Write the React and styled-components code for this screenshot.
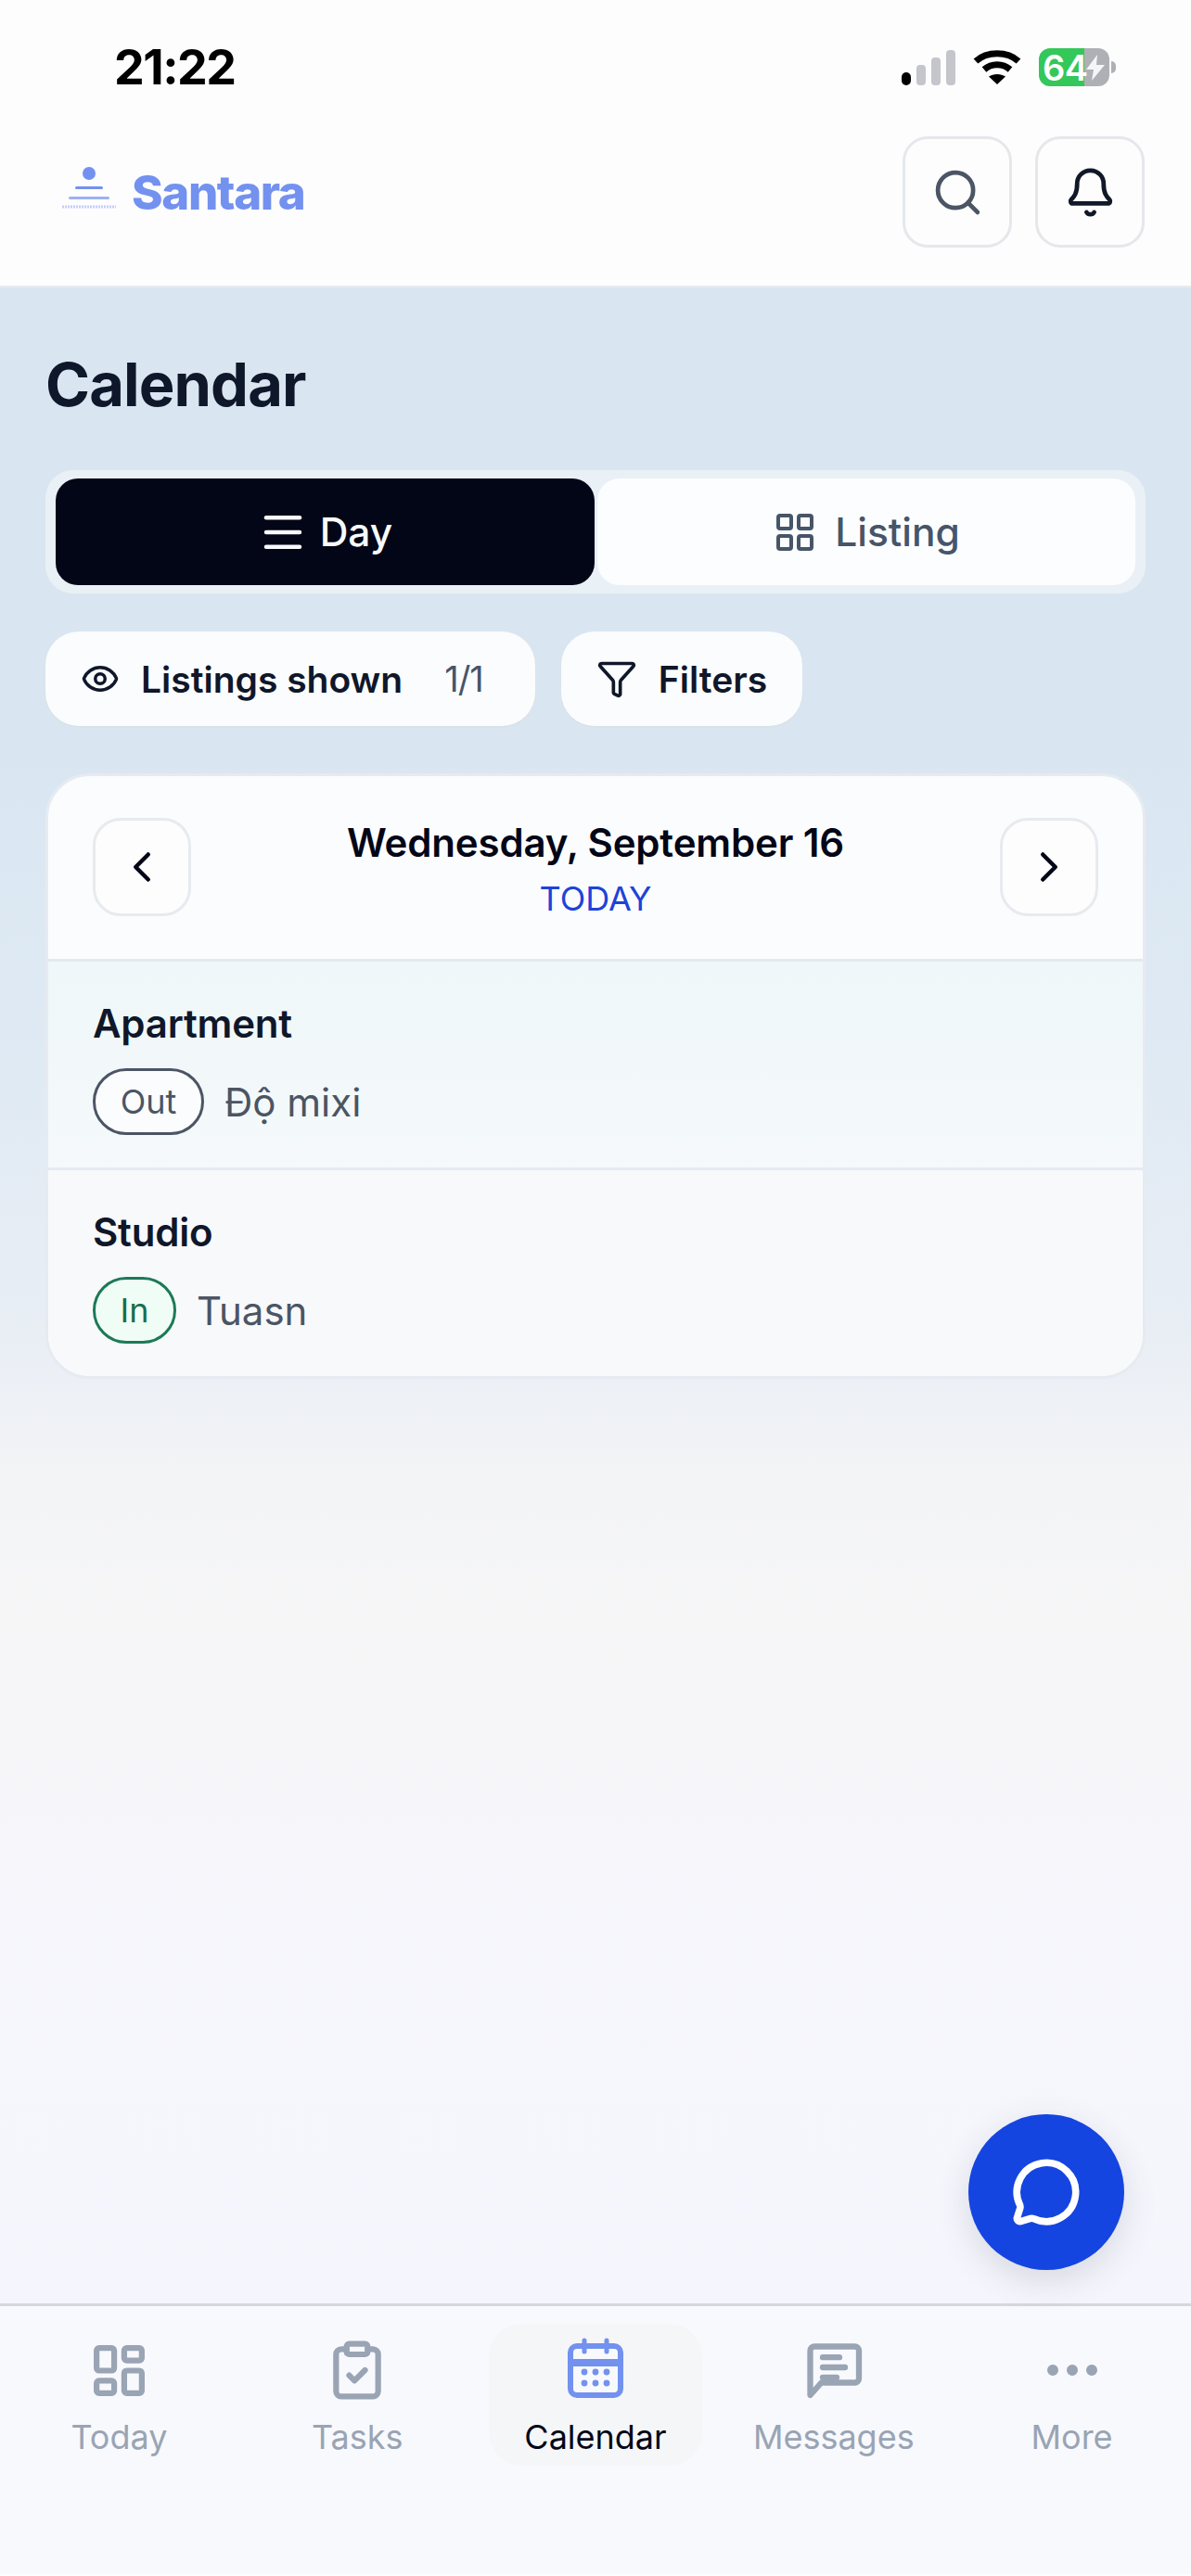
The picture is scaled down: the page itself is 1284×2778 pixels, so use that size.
import styled, { createGlobalStyle } from "styled-components"
import {
    Bell,
    ChevronLeft,
    ChevronRight,
    ClipboardCheck,
    Ellipsis,
    Eye,
    Funnel,
    LayoutDashboard,
    LayoutGrid,
    Menu,
    MessageCircle,
    Search,
} from "lucide-react"

const GlobalStyle = createGlobalStyle`
    html, body {
        margin: 0;
        padding: 0;
    }
    body {
        font-family: "Inter", "Liberation Sans", sans-serif;
        background: #f5f6fd;
    }
    * {
        box-sizing: border-box;
    }
`

const Page = styled.div`
    position: relative;
    display: flex;
    flex-direction: column;
    width: 1284px;
    height: 2778px;
    overflow: hidden;
`

const TopArea = styled.header`
    height: 310px;
    background: #fdfdfe;
    border-bottom: 2px solid #e6ecf2;
`

const StatusBar = styled.div`
    display: flex;
    align-items: center;
    justify-content: space-between;
    height: 147px;
    padding: 0 88px 2px 123px;
`

const Clock = styled.span`
    font-size: 52px;
    font-weight: 700;
    letter-spacing: -1.5px;
    color: #000;
`

const StatusIcons = styled.div`
    display: flex;
    align-items: center;
    gap: 19px;
`

const Battery = styled.div`
    position: relative;
    display: flex;
    align-items: center;
    width: 76px;
    height: 41px;
    padding-left: 4px;
    border-radius: 12px;
    background: linear-gradient(90deg, #34c759 64%, #aeb0b6 64%);
    font-size: 38px;
    font-weight: 600;
    letter-spacing: -0.5px;
    color: #fff;

    &::after {
        content: "";
        position: absolute;
        right: -7px;
        top: 14px;
        width: 5px;
        height: 13px;
        border-radius: 0 5px 5px 0;
        background: #aeb0b6;
    }
`

const BoltMark = styled.svg`
    position: absolute;
    right: 4px;
    top: 7px;
`

const HeaderRow = styled.div`
    display: flex;
    align-items: center;
    justify-content: space-between;
    padding: 0 50px 0 67px;
`

const Brand = styled.div`
    display: flex;
    align-items: center;
    gap: 15px;
`

const BrandName = styled.span`
    font-size: 51px;
    font-weight: 800;
    letter-spacing: -1.4px;
    color: #7391ef;
`

const HeaderActions = styled.div`
    display: flex;
    gap: 25px;
`

const IconButton = styled.button`
    display: flex;
    align-items: center;
    justify-content: center;
    width: 118px;
    height: 120px;
    padding: 0;
    border: 3px solid #e5e7eb;
    border-radius: 27px;
    background: #fdfdfe;
    color: ${(props) => props.$color};
`

const Main = styled.main`
    flex: 1;
    display: flex;
    flex-direction: column;
    padding: 69px 49px 0;
    background: linear-gradient(
        180deg,
        #d9e6f1 0%,
        #d9e6f1 22%,
        #dee9f3 36%,
        #e9eef5 52%,
        #f3f4f6 59%,
        #f6f6f7 66%,
        #f6f6fb 78%,
        #f5f6fd 100%
    );
`

const PageTitle = styled.h1`
    margin: 0;
    font-size: 65px;
    line-height: 72px;
    font-weight: 700;
    letter-spacing: -0.9px;
    color: #0f172a;
`

const Segmented = styled.div`
    display: grid;
    grid-template-columns: 581px 1fr;
    gap: 3px;
    height: 133px;
    margin-top: 56px;
    padding: 9px 11px;
    border-radius: 30px;
    background: #e9f0f6;
`

const SegmentButton = styled.button`
    display: flex;
    align-items: center;
    justify-content: center;
    gap: ${(props) => (props.$active ? "13px" : "19px")};
    padding: 0;
    border: 0;
    border-radius: 24px;
    font-family: inherit;
    font-size: 42.5px;
    font-weight: 550;
    background: ${(props) => (props.$active ? "#020617" : "#fcfdfe")};
    color: ${(props) => (props.$active ? "#f8fafc" : "#475569")};
`

const ChipRow = styled.div`
    display: flex;
    gap: 28px;
    margin-top: 41px;
`

const Chip = styled.button`
    display: flex;
    align-items: center;
    height: 102px;
    padding: 0 ${(props) => props.$paddingRight}px 0 38px;
    gap: 23px;
    border: 0;
    border-radius: 36px;
    background: #fbfcfd;
    box-shadow: 0 1px 2px #d9dde2;
    font-family: inherit;
    font-size: 39px;
    font-weight: 600;
    color: #0f172a;
`

const ChipCount = styled.span`
    margin-left: 22px;
    font-size: 38px;
    font-weight: 400;
    letter-spacing: -1px;
    color: #475569;
`

const CalendarCard = styled.section`
    margin-top: 51px;
    overflow: hidden;
    border: 3px solid #e6ebf1;
    border-radius: 48px;
    background: #fbfcfd;
`

const DayHeader = styled.div`
    display: flex;
    justify-content: space-between;
    height: 200px;
    padding: 45px 48px 0;
    border-bottom: 3px solid #e4e9ef;
`

const DayButton = styled.button`
    display: flex;
    align-items: center;
    justify-content: center;
    width: 106px;
    height: 106px;
    padding: 0;
    border: 3px solid #e7eaef;
    border-radius: 30px;
    background: #fdfdfe;
    color: #020617;
`

const DayInfo = styled.div`
    display: flex;
    flex-direction: column;
    align-items: center;
`

const DayTitle = styled.div`
    font-size: 42px;
    line-height: 54px;
    font-weight: 600;
    letter-spacing: -0.15px;
    color: #020617;
`

const TodayTag = styled.div`
    margin-top: 8px;
    font-size: 36px;
    line-height: 50px;
    color: #1d43d8;
`

const ListingRow = styled.div`
    height: ${(props) => props.$height}px;
    padding: 40px 48px 0;
    background: ${(props) => props.$bg};
    border-bottom: ${(props) => (props.$last ? "0" : "3px solid #e4eaf1")};
`

const ListingName = styled.div`
    font-size: 42px;
    line-height: 54px;
    font-weight: 600;
    letter-spacing: -0.2px;
    color: #0f172a;
`

const BookingLine = styled.div`
    display: flex;
    align-items: center;
    gap: 22px;
    margin-top: 21px;
    font-size: 42px;
    color: #4b5563;
`

const StatusPill = styled.span`
    display: flex;
    align-items: center;
    justify-content: center;
    width: ${(props) => (props.$in ? 90 : 120)}px;
    height: 72px;
    border: 3.5px solid ${(props) => (props.$in ? "#1c7a56" : "#4b5563")};
    border-radius: 36px;
    background: ${(props) => (props.$in ? "#f0fdf6" : "#fbfcfd")};
    font-size: 36px;
    color: ${(props) => (props.$in ? "#15704c" : "#4b5563")};
`

const ChatFab = styled.button`
    position: absolute;
    left: 1044px;
    top: 2280px;
    display: flex;
    align-items: center;
    justify-content: center;
    width: 168px;
    height: 168px;
    padding: 0;
    border: 0;
    border-radius: 50%;
    background: #1545e0;
    box-shadow: 0 12px 36px rgba(60, 70, 90, 0.16);
    color: #fff;
`

const BottomNav = styled.nav`
    display: grid;
    grid-template-columns: repeat(5, 1fr);
    justify-items: center;
    align-content: start;
    height: 294px;
    padding-top: 19px;
    background: #f8f9fd;
    border-top: 3px solid #d6d7de;
    border-bottom: 2px solid #fdfdfe;
`

const NavItem = styled.div`
    display: flex;
    flex-direction: column;
    align-items: center;
    width: 230px;
    height: 153px;
    padding-top: 14px;
    border-radius: 36px;
    background: ${(props) => (props.$active ? "#f5f6f8" : "transparent")};
    color: #99a4b4;
`

const NavIconBox = styled.span`
    display: flex;
    align-items: center;
    justify-content: center;
    height: 72px;
`

const NavLabel = styled.span`
    margin-top: 14px;
    font-size: 36px;
    line-height: 44px;
    color: ${(props) => (props.$active ? "#020617" : "#99a4b4")};
`

const LogoMark = () => (
    <svg width="60" height="72" viewBox="0 0 60 72" fill="none">
        <circle cx="29" cy="16" r="7" fill="#7391ef" />
        <rect x="14" y="30" width="30" height="3" rx="1.5" fill="#7391ef" />
        <rect x="7" y="41" width="44" height="3" rx="1.5" fill="#9db2f4" />
        <line x1="0" y1="52" x2="58" y2="52" stroke="#c3cff7" strokeWidth="3" strokeDasharray="2 1" />
    </svg>
)

const SignalIcon = () => (
    <svg width="58" height="38" viewBox="0 0 58 38">
        <rect x="0" y="24" width="10" height="14" rx="5" fill="#000" />
        <rect x="16" y="16" width="10" height="22" rx="4" fill="#c4c6cc" />
        <rect x="32" y="8" width="10" height="30" rx="4" fill="#c4c6cc" />
        <rect x="48" y="0" width="10" height="38" rx="4" fill="#c4c6cc" />
    </svg>
)

const WifiIcon = () => (
    <svg width="52" height="38" viewBox="0 0 52 38" fill="none" stroke="#000" strokeWidth="7">
        <path d="M3 12C15 1 37 1 49 12" />
        <path d="M12 21C20 14 32 14 40 21" />
        <path d="M26 37L17 28.5C22 25 30 25 35 28.5Z" fill="#000" stroke="none" />
    </svg>
)

const CalendarActiveIcon = () => (
    <svg width="72" height="72" viewBox="0 0 72 72" fill="none">
        <rect x="9" y="10" width="54" height="53" rx="7" fill="#f8f9fd" stroke="#7391ef" strokeWidth="6" />
        <rect x="9" y="24" width="54" height="8" fill="#7391ef" />
        <path d="M24 4V16M48 4V16" stroke="#7391ef" strokeWidth="5" strokeLinecap="round" />
        {[24, 36, 48].map((x) => (
            <g key={x} fill="#7391ef">
                <circle cx={x} cy="38" r="3.4" />
                <circle cx={x} cy="50" r="3.4" />
            </g>
        ))}
    </svg>
)

const MessagesIcon = () => (
    <svg
        width="72"
        height="72"
        viewBox="0 0 24 24"
        fill="none"
        stroke="currentColor"
        strokeWidth="2.1"
        strokeLinecap="round"
        strokeLinejoin="round"
    >
        <path d="M21 15a1.500 1.500 0 0 1-1.500 1.500H7.500L3.500 21V5a1.500 1.500 0 0 1 1.500-1.500h14.500A1.500 1.500 0 0 1 21 5z" />
        <path d="M8 7.400h6M8 11h8M8 14.600h5" />
    </svg>
)

const tabs = [
    { label: "Today", icon: <LayoutDashboard size={65} strokeWidth={2.3} /> },
    { label: "Tasks", icon: <ClipboardCheck size={68} strokeWidth={2.2} /> },
    { label: "Calendar", icon: <CalendarActiveIcon />, active: true },
    { label: "Messages", icon: <MessagesIcon /> },
    { label: "More", icon: <Ellipsis size={72} /> },
]

const App = () => {
    return (
        <Page>
            <GlobalStyle />
            <TopArea>
                <StatusBar>
                    <Clock>21:22</Clock>
                    <StatusIcons>
                        <SignalIcon />
                        <WifiIcon />
                        <Battery>
                            64
                            <BoltMark width="22" height="28" viewBox="0 0 22 28">
                                <path d="M13 0L1 16h8l-2 12L21 11h-9z" fill="#f4f5f6" />
                            </BoltMark>
                        </Battery>
                    </StatusIcons>
                </StatusBar>
                <HeaderRow>
                    <Brand>
                        <LogoMark />
                        <BrandName>Santara</BrandName>
                    </Brand>
                    <HeaderActions>
                        <IconButton $color='#4b5563'>
                            <Search size={57} strokeWidth={2} />
                        </IconButton>
                        <IconButton $color='#111827'>
                            <Bell size={57} strokeWidth={2} />
                        </IconButton>
                    </HeaderActions>
                </HeaderRow>
            </TopArea>

            <Main>
                <PageTitle>Calendar</PageTitle>

                <Segmented>
                    <SegmentButton $active>
                        <Menu size={54} strokeWidth={2} />
                        Day
                    </SegmentButton>
                    <SegmentButton>
                        <LayoutGrid size={48} strokeWidth={2} />
                        Listing
                    </SegmentButton>
                </Segmented>

                <ChipRow>
                    <Chip $paddingRight={56}>
                        <Eye size={42} strokeWidth={2} />
                        Listings shown
                        <ChipCount>1/1</ChipCount>
                    </Chip>
                    <Chip $paddingRight={38}>
                        <Funnel size={44} strokeWidth={2} />
                        Filters
                    </Chip>
                </ChipRow>

                <CalendarCard>
                    <DayHeader>
                        <DayButton>
                            <ChevronLeft size={54} strokeWidth={2} />
                        </DayButton>
                        <DayInfo>
                            <DayTitle>Wednesday, September 16</DayTitle>
                            <TodayTag>TODAY</TodayTag>
                        </DayInfo>
                        <DayButton>
                            <ChevronRight size={54} strokeWidth={2} />
                        </DayButton>
                    </DayHeader>

                    <ListingRow $height={225} $bg='linear-gradient(180deg, #eff7f8, #f5f9fb)'>
                        <ListingName>Apartment</ListingName>
                        <BookingLine>
                            <StatusPill>Out</StatusPill>
                            Độ mixi
                        </BookingLine>
                    </ListingRow>
                    <ListingRow $height={222} $bg='#f8f9fb' $last>
                        <ListingName>Studio</ListingName>
                        <BookingLine>
                            <StatusPill $in>In</StatusPill>
                            Tuasn
                        </BookingLine>
                    </ListingRow>
                </CalendarCard>
            </Main>

            <ChatFab>
                <MessageCircle size={76} strokeWidth={2.4} />
            </ChatFab>

            <BottomNav>
                {tabs.map((tab) => (
                    <NavItem key={tab.label} $active={tab.active}>
                        <NavIconBox>{tab.icon}</NavIconBox>
                        <NavLabel $active={tab.active}>{tab.label}</NavLabel>
                    </NavItem>
                ))}
            </BottomNav>
        </Page>
    )
}

export default App
